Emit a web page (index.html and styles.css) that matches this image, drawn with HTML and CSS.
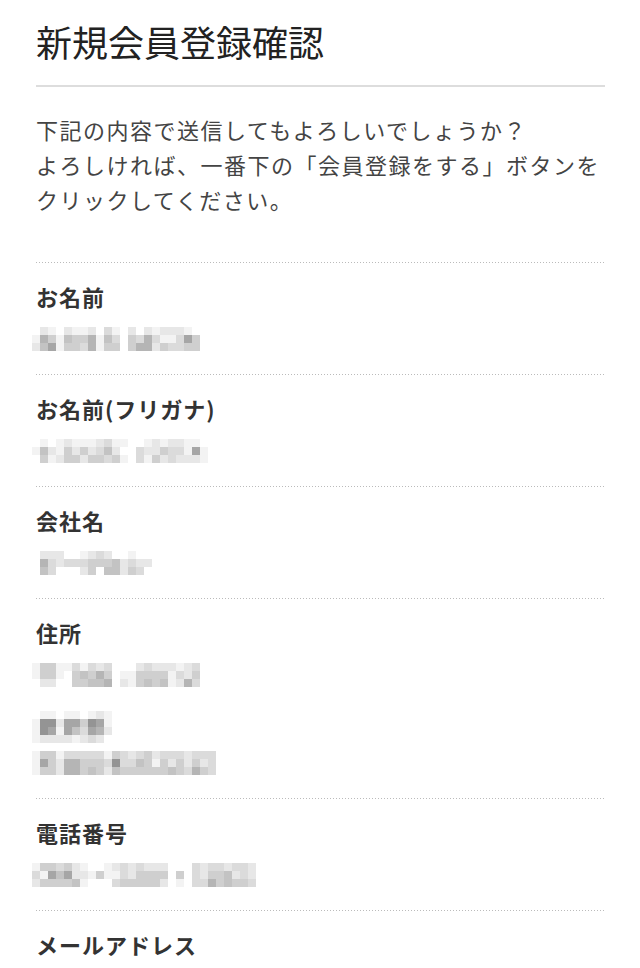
FILE: index.html
```html
<!DOCTYPE html>
<html lang="ja">
<head>
  <meta charset="UTF-8">
  <title>新規会員登録確認</title>
  <link rel="stylesheet" href="styles.css">
</head>
<body>
  <div class="page">
    <h1 class="page-title">新規会員登録確認</h1>

    <p class="lead">下記の内容で送信してもよろしいでしょうか？<br>よろしければ、一番下の「会員登録をする」ボタンをクリックしてください。</p>

    <div class="item">
      <h2 class="label">お名前</h2>
      <div class="mosaic" data-rows="0210211203102021222100|1641544615304363113740|2571443614404662433440"></div>
    </div>

    <div class="item">
      <h2 class="label">お名前(フリガナ)</h2>
      <div class="mosaic" data-rows="0101211123110012122110|1521424235200322433171|0412442443410314232221"></div>
    </div>

    <div class="item">
      <h2 class="label">会社名</h2>
      <div class="mosaic" data-rows="022200123200100|063233344452322|053000240552430"></div>
    </div>

    <div class="item">
      <h2 class="label">住所</h2>
      <div class="mosaic" data-rows="144113132300023222123|144104546401144441324|022004455602145451263"></div>
      <div class="mosaic mosaic-gap" data-rows="0110110121|1882774871|1871753762|1222212320"></div>
      <div class="mosaic mosaic-tight" data-rows="14413333314323423332333|17426644438335414242423|14426645425444444543643"></div>
    </div>

    <div class="item">
      <h2 class="label">電話番号</h2>
      <div class="mosaic" data-rows="1443421001232322200032332332|3175722141132444404032445232|2444451000344444201033645443"></div>
    </div>

    <div class="item">
      <h2 class="label">メールアドレス</h2>
      <div class="mosaic" data-rows="0122121013221232112200|1542634513524463325410|0433453024431452343320"></div>
    </div>
  </div>

  <script>
    // 個人情報はモザイク表示（data-rows の数字 = 濃さ）
    document.querySelectorAll(".mosaic").forEach(box => {
      box.dataset.rows.split("|").forEach(row => {
        const line = document.createElement("div");
        line.className = "mosaic-row";
        [...row].forEach(level => {
          const cell = document.createElement("span");
          cell.className = "cell g" + level;
          line.appendChild(cell);
        });
        box.appendChild(line);
      });
    });
  </script>
</body>
</html>
```

FILE: styles.css
```css
body {
  margin: 0;
  padding: 0;
  font-family: "Noto Sans CJK JP", "Noto Sans", sans-serif;
  background-color: #fff;
  color: #333;
}

.page {
  padding: 0 35px 0 36px;
}

.page-title {
  margin: 0;
  padding: 14px 0 17px;
  font-size: 36px;
  font-weight: 400;
  line-height: 54px;
  color: #222;
  border-bottom: 2px solid #ddd;
}

.lead {
  margin: 25px 0 45px;
  font-size: 22px;
  line-height: 35px;
  letter-spacing: 1.5px;
  color: #444;
}

.item {
  padding: 19px 0 23px;
  background: repeating-linear-gradient(to right, #bbb 0 1px, transparent 1px 3px) top left / 100% 1px no-repeat;
}

.label {
  margin: 0;
  font-size: 22px;
  font-weight: 700;
  line-height: 30px;
  letter-spacing: 1px;
  color: #333;
}

.mosaic {
  margin: 16px 0 0 -4px;
}

.mosaic-gap {
  margin-top: 24px;
}

.mosaic-tight {
  margin-top: 8px;
}

.mosaic-row {
  display: flex;
  height: 8px;
}

.cell {
  width: 8px;
  height: 8px;
}

.g0 { background-color: transparent; }
.g1 { background-color: #f3f3f3; }
.g2 { background-color: #e7e7e7; }
.g3 { background-color: #dbdbdb; }
.g4 { background-color: #cfcfcf; }
.g5 { background-color: #c3c3c3; }
.g6 { background-color: #b5b5b5; }
.g7 { background-color: #a6a6a6; }
.g8 { background-color: #949494; }
.g9 { background-color: #848484; }
```
